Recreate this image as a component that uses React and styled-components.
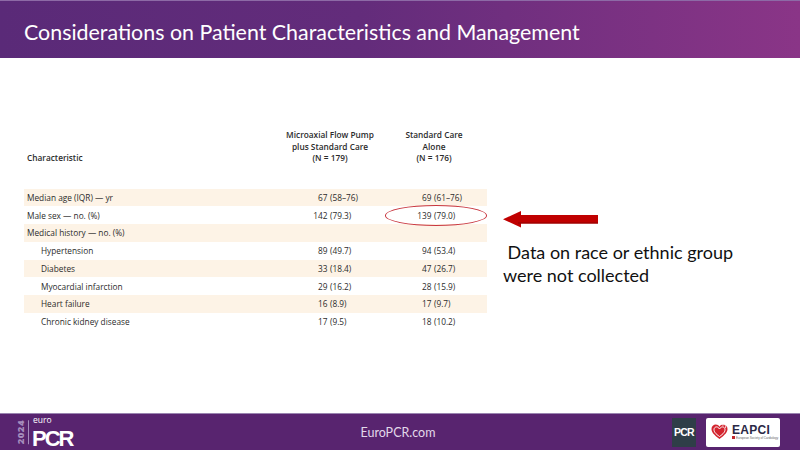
import React from 'react';
import styled, { createGlobalStyle } from 'styled-components';

const GlobalStyle = createGlobalStyle`
  html, body {
    margin: 0;
    padding: 0;
    background: #ffffff;
  }
  body {
    font-family: "Open Sans", "Liberation Sans", sans-serif;
  }
`;

const Slide = styled.div`
  width: 800px;
  height: 450px;
  display: flex;
  flex-direction: column;
  overflow: hidden;
  background: #ffffff;
`;

const Header = styled.header`
  height: 58px;
  flex: none;
  display: flex;
  align-items: center;
  padding: 0 0 0 24px;
  background: linear-gradient(90deg, #5a2a78 0%, #632c7b 45%, #8a3587 100%);
  border-top: 1px solid #8d6aa6;
  box-sizing: border-box;
`;

const Title = styled.h1`
  margin: 0;
  padding-top: 5px;
  font-family: Lato, "Open Sans", sans-serif;
  font-weight: 400;
  font-size: 21.4px;
  color: #ffffff;
`;

const Main = styled.main`
  flex: 1;
  display: flex;
  padding: 71px 0 0 24px;
`;

const Table = styled.div`
  width: 463px;
  flex: none;
  font-family: "Open Sans", "Liberation Sans", sans-serif;
  font-size: 8.3px;
  color: #2b2b2b;
`;

const HeadRow = styled.div`
  display: grid;
  grid-template-columns: 255px 102px 106px;
  align-items: end;
  margin-bottom: 25px;
`;

const HeadCell = styled.div`
  font-weight: 600;
  line-height: 11.5px;
  text-align: ${({ $center }) => ($center ? 'center' : 'left')};
  padding-left: ${({ $center }) => ($center ? '0' : '3px')};
`;

const Row = styled.div`
  display: grid;
  grid-template-columns: 255px 102px 106px;
  align-items: center;
  height: 17.75px;
  background: ${({ $shaded }) => ($shaded ? '#fdf3e6' : 'transparent')};
`;

const Label = styled.div`
  padding-left: ${({ $indent }) => ($indent ? '17px' : '3px')};
`;

const ValueCell = styled.div`
  position: relative;
  height: 100%;
  display: grid;
  grid-template-columns: 1fr 1fr;
  align-items: center;
`;

const Count = styled.span`
  text-align: right;
  padding-right: 2.5px;
`;

const Pct = styled.span`
  text-align: left;
`;

const Highlight = styled.div`
  position: absolute;
  left: 4px;
  right: 0;
  top: -1px;
  bottom: -2px;
  border: 1px solid #c8353e;
  border-radius: 50%;
`;

const Aside = styled.aside`
  margin-left: 16px;
  padding-top: 81px;
  display: flex;
  flex-direction: column;
  gap: 13px;
`;

const Note = styled.p`
  margin: 0;
  font-family: Lato, "Open Sans", sans-serif;
  font-size: 18px;
  line-height: 23px;
  color: #111111;
  white-space: pre;
`;

const Footer = styled.footer`
  height: 37px;
  flex: none;
  display: grid;
  grid-template-columns: 1fr auto 1fr;
  align-items: center;
  background: #58246f;
  border-top: 1px solid #9a84b0;
  box-sizing: border-box;
  padding: 0 20px 0 16px;
`;

const Brand = styled.div`
  display: flex;
  align-items: center;
  gap: 3px;
`;

const Year = styled.span`
  writing-mode: vertical-rl;
  transform: rotate(180deg);
  font-family: "Open Sans", sans-serif;
  font-weight: 800;
  font-size: 9.5px;
  letter-spacing: 0.5px;
  color: #a58cbc;
  line-height: 10px;
  padding-left: 2px;
  border-left: 1px solid #a58cbc;
`;

const BrandText = styled.div`
  display: flex;
  flex-direction: column;
  color: #ffffff;
`;

const Euro = styled.span`
  font-family: "Open Sans", sans-serif;
  font-size: 8.5px;
  line-height: 11.6px;
  margin-left: 1px;
`;

const PcrMark = styled.span`
  font-family: "Liberation Sans", sans-serif;
  font-weight: 700;
  font-size: 22px;
  line-height: 25.3px;
  letter-spacing: -2px;
`;

const Site = styled.span`
  font-family: Lato, "Open Sans", sans-serif;
  font-size: 12.5px;
  color: #e2d9ea;
`;

const Partners = styled.div`
  justify-self: end;
  display: flex;
  align-items: center;
  gap: 10px;
`;

const PcrBox = styled.div`
  width: 24px;
  height: 29px;
  background: #2f3e48;
  display: flex;
  align-items: center;
  justify-content: center;
  font-family: "Liberation Sans", sans-serif;
  font-weight: 700;
  font-size: 10.5px;
  letter-spacing: -0.8px;
  color: #ffffff;
`;

const EapciBox = styled.div`
  width: 74px;
  height: 29px;
  box-sizing: border-box;
  background: #ffffff;
  border-radius: 2px;
  display: flex;
  align-items: center;
  gap: 4px;
  padding-left: 5px;
`;

const EapciText = styled.div`
  display: flex;
  flex-direction: column;
`;

const EapciName = styled.span`
  font-family: "Liberation Sans", sans-serif;
  font-weight: 700;
  font-size: 12px;
  line-height: 12px;
  color: #2b2946;
  letter-spacing: 0.3px;
`;

const EapciSub = styled.span`
  font-family: "Liberation Sans", sans-serif;
  font-size: 3px;
  line-height: 5px;
  color: #666;
  white-space: nowrap;
  &::before {
    content: '';
    display: inline-block;
    width: 3px;
    height: 3px;
    margin-right: 1px;
    background: #c0262d;
  }
`;

const rows = [
  { label: 'Median age (IQR) — yr', a: ['67', '(58–76)'], b: ['69', '(61–76)'] },
  { label: 'Male sex — no. (%)', a: ['142', '(79.3)'], b: ['139', '(79.0)'], mark: true },
  { label: 'Medical history — no. (%)' },
  { label: 'Hypertension', indent: true, a: ['89', '(49.7)'], b: ['94', '(53.4)'] },
  { label: 'Diabetes', indent: true, a: ['33', '(18.4)'], b: ['47', '(26.7)'] },
  { label: 'Myocardial infarction', indent: true, a: ['29', '(16.2)'], b: ['28', '(15.9)'] },
  { label: 'Heart failure', indent: true, a: ['16', '(8.9)'], b: ['17', '(9.7)'] },
  { label: 'Chronic kidney disease', indent: true, a: ['17', '(9.5)'], b: ['18', '(10.2)'] },
];

function Value({ v, mark }) {
  return (
    <ValueCell>
      {v && (
        <>
          <Count>{v[0]}</Count>
          <Pct>{v[1]}</Pct>
        </>
      )}
      {mark && <Highlight />}
    </ValueCell>
  );
}

function Arrow() {
  return (
    <svg width="96" height="18" viewBox="0 0 96 18">
      <rect x="15" y="5" width="80" height="8.5" fill="#c00000" />
      <polygon points="0,9.2 18,1 18,17.5" fill="#c00000" />
      <rect x="15" y="12.5" width="80" height="1" fill="#8f0000" />
    </svg>
  );
}

function Heart() {
  return (
    <svg width="17" height="16" viewBox="0 0 17 16">
      <path d="M8.5 15 C3 11 0.5 8 0.5 5 C0.5 2.2 2.6 0.5 4.8 0.5 C6.4 0.5 7.7 1.4 8.5 2.8 C9.3 1.4 10.6 0.5 12.2 0.5 C14.4 0.5 16.5 2.2 16.5 5 C16.5 8 14 11 8.5 15 Z" fill="#d3232e" />
      <path d="M8.5 12.5 C4.5 9.8 3 7.8 3 5.6 C3 3.9 4.2 2.9 5.5 2.9 C6.8 2.9 7.8 3.8 8.5 5 C9.2 3.8 10.2 2.9 11.5 2.9 C12.8 2.9 14 3.9 14 5.6 C14 7.8 12.5 9.8 8.5 12.5 Z" fill="none" stroke="#ffffff" strokeWidth="1" />
      <path d="M11 1 L15 0.5 L14.5 4" fill="none" stroke="#ffffff" strokeWidth="0.8" />
    </svg>
  );
}

export default function App() {
  return (
    <Slide>
      <GlobalStyle />
      <Header>
        <Title>Considerations on Patient Characteristics and Management</Title>
      </Header>
      <Main>
        <Table>
          <HeadRow>
            <HeadCell>Characteristic</HeadCell>
            <HeadCell $center>
              Microaxial Flow Pump
              <br />
              plus Standard Care
              <br />
              (N = 179)
            </HeadCell>
            <HeadCell $center>
              Standard Care
              <br />
              Alone
              <br />
              (N = 176)
            </HeadCell>
          </HeadRow>
          {rows.map((r, i) => (
            <Row key={r.label} $shaded={i % 2 === 0}>
              <Label $indent={r.indent}>{r.label}</Label>
              <Value v={r.a} />
              <Value v={r.b} mark={r.mark} />
            </Row>
          ))}
        </Table>
        <Aside>
          <Arrow />
          <Note>{' Data on race or ethnic group\nwere not collected'}</Note>
        </Aside>
      </Main>
      <Footer>
        <Brand>
          <Year>2024</Year>
          <BrandText>
            <Euro>euro</Euro>
            <PcrMark>PCR</PcrMark>
          </BrandText>
        </Brand>
        <Site>EuroPCR.com</Site>
        <Partners>
          <PcrBox>PCR</PcrBox>
          <EapciBox>
            <Heart />
            <EapciText>
              <EapciName>EAPCI</EapciName>
              <EapciSub>European Society of Cardiology</EapciSub>
            </EapciText>
          </EapciBox>
        </Partners>
      </Footer>
    </Slide>
  );
}
